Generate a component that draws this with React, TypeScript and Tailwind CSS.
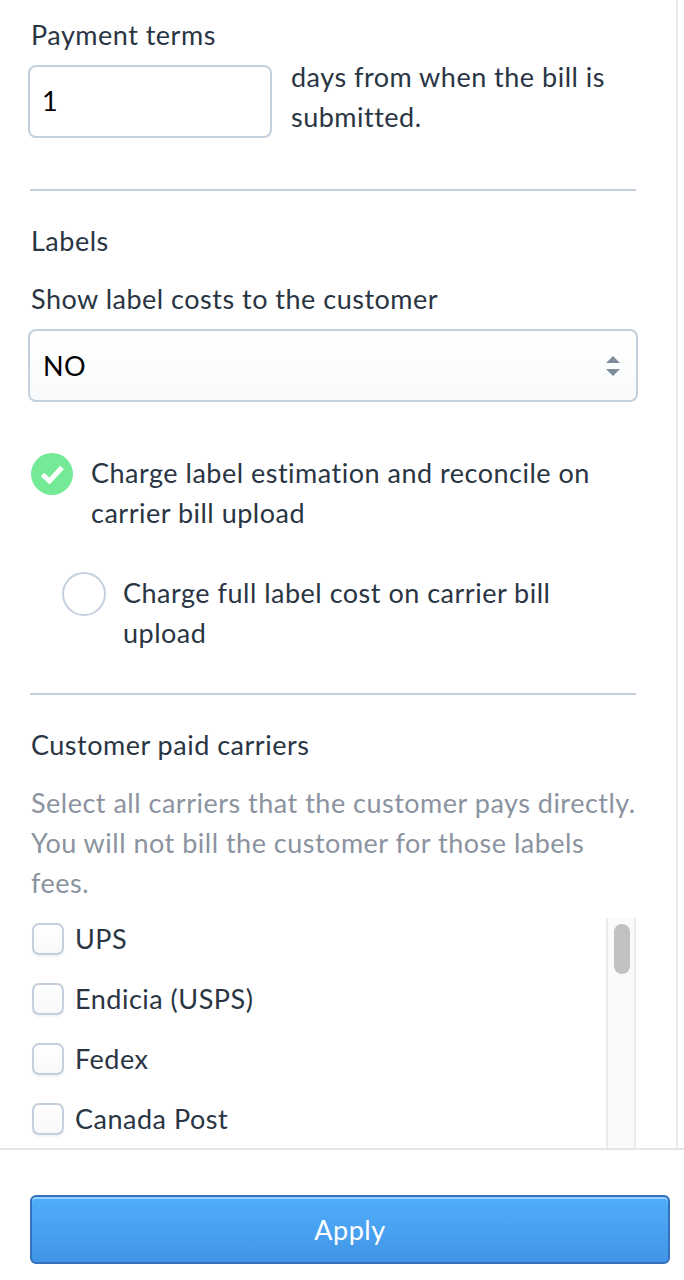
const carriers = ["UPS", "Endicia (USPS)", "Fedex", "Canada Post"];

function Divider({ className }: { className: string }) {
  return <div className={`h-[2px] w-[606px] bg-[#c5d0de] ${className}`} />;
}

export default function App() {
  return (
    <div className="h-[1280px] w-[684px] overflow-hidden bg-white font-['Lato','Liberation_Sans',sans-serif] text-[27px] leading-[40px] tracking-[0.5px] text-[#2a3544]">
      {/* Scrolling form */}
      <div className="h-[1148px] w-[678px] overflow-hidden border-r-2 border-[#ebebeb] pl-[30px] pt-[15px]">
        <div className="h-[40px] pl-px">Payment terms</div>
        <div className="mt-[2px] flex">
          <div className="ml-[-2px] mt-[8px] flex h-[73px] w-[244px] items-center rounded-[8px] border-2 border-[#c5d0de] bg-white pb-[2px] pl-[12px] text-black">
            1
          </div>
          <div className="ml-[19px] w-[340px]">days from when the bill is submitted.</div>
        </div>

        <Divider className="mt-[51px]" />
        <div className="mt-[30px] pl-px">Labels</div>
        <div className="mt-[18px] pl-px">Show label costs to the customer</div>

        <div className="ml-[-2px] mt-[10px] flex h-[73px] w-[610px] items-center justify-between rounded-[8px] border-2 border-[#c5d0de] bg-gradient-to-b from-white to-[#f8fafb] pl-[13px] pr-[16px] text-black">
          <span>NO</span>
          <svg width="14" height="20" viewBox="0 0 14 20" className="fill-[#7d8b9b]">
            <path d="M7 0l7 7H0zM7 20L0 13h14z" />
          </svg>
        </div>

        <div className="mt-[51px] flex">
          <div className="ml-px h-[42px] w-[42px] shrink-0 rounded-full bg-[#74ea96]">
            <svg width="42" height="42" viewBox="0 0 42 42" fill="none" stroke="white" strokeWidth="5">
              <path d="M11.5 21.5l7 6.5 12.5-13.5" />
            </svg>
          </div>
          <div className="ml-[18px] w-[530px]">Charge label estimation and reconcile on carrier bill upload</div>
        </div>

        <div className="ml-[32px] mt-[40px] flex">
          <div className="mt-[-1px] h-[44px] w-[44px] shrink-0 rounded-full border-2 border-[#c5d0de] bg-white" />
          <div className="ml-[17px] w-[470px]">Charge full label cost on carrier bill upload</div>
        </div>

        <Divider className="mt-[40px]" />
        <div className="mt-[30px] pl-px">Customer paid carriers</div>
        <div className="mt-[18px] w-[610px] pl-px text-[#8b93a0]">
          Select all carriers that the customer pays directly. You will not bill the customer for those labels fees.
        </div>

        {/* Carrier list */}
        <div className="mt-[15px] flex h-[240px] w-[606px] overflow-hidden">
          <div className="flex flex-1 flex-col gap-[18px]">
            {carriers.map((carrier) => (
              <div key={carrier} className="flex h-[42px] shrink-0 items-center">
                <div className="ml-[2px] h-[32px] w-[32px] shrink-0 rounded-[7px] border-2 border-[#c5d0de] bg-gradient-to-b from-white to-[#f6f8fa] shadow-[0_2px_2px_rgba(0,0,0,0.05)]" />
                <span className="ml-[11px]">{carrier}</span>
              </div>
            ))}
          </div>
          <div className="h-full w-[30px] border-x-2 border-[#ebebeb] bg-[#fafafa] pl-[6px] pt-[6px]">
            <div className="h-[50px] w-[16px] rounded-full bg-[#c1c1c1]" />
          </div>
        </div>
      </div>

      {/* Footer */}
      <div className="h-[132px] border-t-2 border-[#e2e5e9] pl-[30px] pt-[45px]">
        <button className="h-[69px] w-[640px] rounded-[6px] border-2 border-[#3371bd] bg-gradient-to-b from-[#50aefb] to-[#4295e6] text-white shadow-[inset_0_2px_0_rgba(255,255,255,0.4)]">
          Apply
        </button>
      </div>
    </div>
  );
}
